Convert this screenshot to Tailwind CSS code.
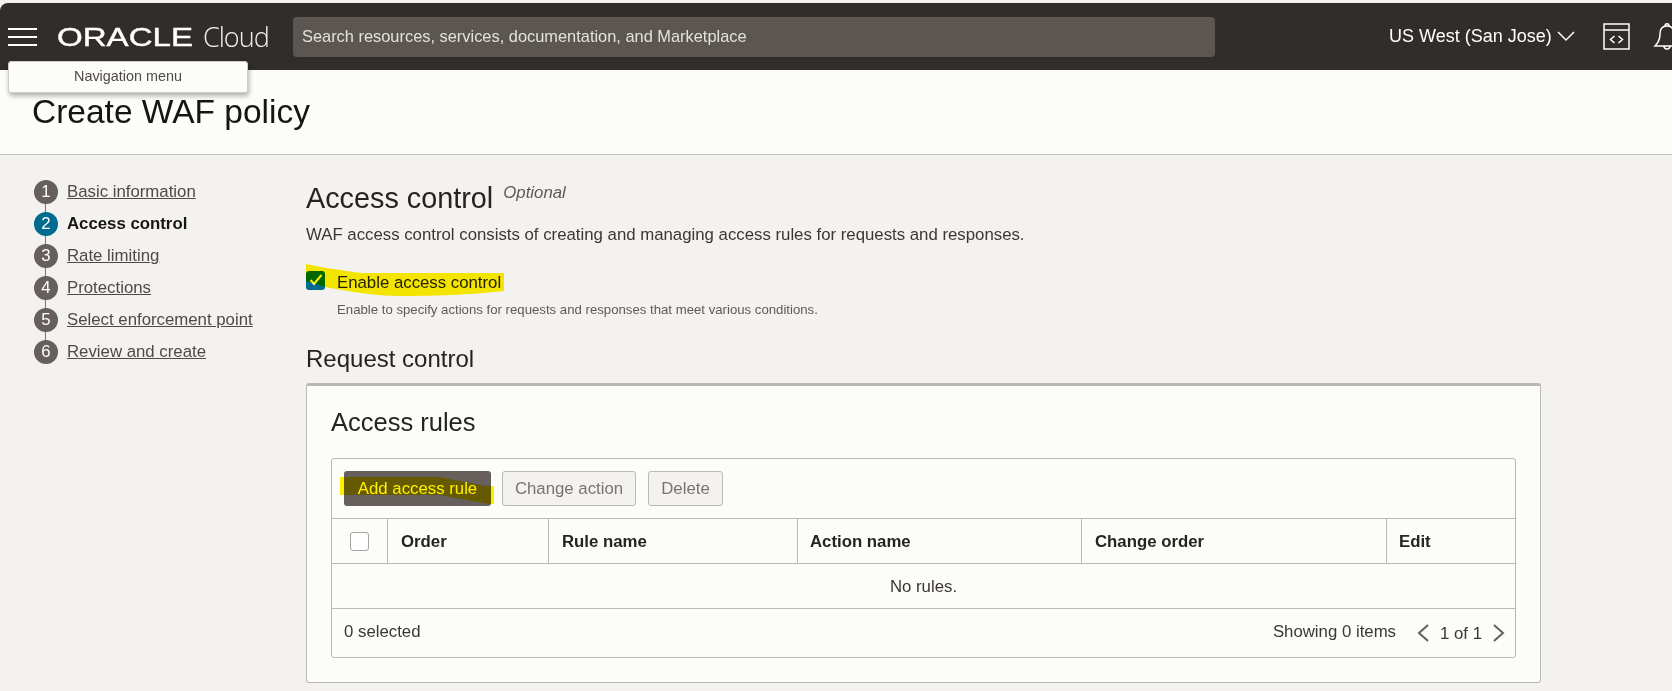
<!DOCTYPE html>
<html lang="en">
<head>
  <meta charset="UTF-8">
  <meta name="viewport" content="width=device-width, initial-scale=1.0">
  <title>Create WAF policy</title>
  <script src="https://cdn.jsdelivr.net/npm/@tailwindcss/browser@4"></script>
</head>
<body class="relative h-[691px] w-[1672px] overflow-hidden bg-[#f3f2f1] pt-[3px] font-['Liberation_Sans',Arial,sans-serif] text-[#312d2a]">
  <!-- top bar -->
  <header class="flex h-[67px] items-center overflow-hidden rounded-tl-lg bg-[#312d2a] text-white">
    <div class="ml-2 flex w-[29px] shrink-0 flex-col gap-[6px]">
      <span class="h-[2px] bg-white"></span>
      <span class="h-[2px] bg-white"></span>
      <span class="h-[2px] bg-white"></span>
    </div>
    <svg class="ml-5 shrink-0" width="137" height="26" viewBox="0 0 137 26">
      <text x="0" y="22" font-family="Liberation Sans" font-size="25" fill="#fff" stroke="#fff" stroke-width="0.4" textLength="136" lengthAdjust="spacingAndGlyphs">ORACLE</text>
    </svg>
    <span class="ml-[9px] w-[90px] shrink-0 font-['Open_Sans',sans-serif] text-[27px] leading-none font-light tracking-[-1px] text-[#f2f0ed]">Cloud</span>
    <div class="flex h-10 w-[922px] shrink-0 items-center rounded bg-[#5b5652] px-[9px] text-[16.4px] text-[#e4e1dd]">Search resources, services, documentation, and Marketplace</div>
    <span class="ml-[174px] w-[163px] shrink-0 text-[18px] whitespace-nowrap">US West (San Jose)</span>
    <svg class="ml-[5px] shrink-0" width="18" height="11" viewBox="0 0 18 11" fill="none" stroke="#fff" stroke-width="1.5"><path d="M1 1l8 8 8-8"/></svg>
    <svg class="ml-[28px] shrink-0" width="27" height="27" viewBox="0 0 27 27" fill="none" stroke="#fff" stroke-width="1.5"><rect x="1" y="1" width="25" height="25"/><path d="M1 7h25M11.5 13l-4 3.5 4 3.5M15.5 13l4 3.5-4 3.5"/></svg>
    <svg class="ml-[23px] shrink-0" width="28" height="30" viewBox="0 0 28 30" fill="none" stroke="#fff" stroke-width="1.5"><path d="M14 4c-5 0-7 3-7 8 0 6-2 9-5 12h24c-3-3-5-6-5-12 0-5-2-8-7-8zM12 4c0-3 4-3 4 0M11 24c0 4 6 4 6 0"/></svg>
  </header>

  <!-- page title -->
  <div class="h-[85px] border-b border-[#c4c0bb] bg-[#fcfcfb] pt-[22px] pl-8">
    <h1 class="text-[33.5px] leading-10 text-[#161513]">Create WAF policy</h1>
  </div>

  <div class="flex">
    <!-- train stops -->
    <ol class="relative ml-[34px] mt-[21px] w-[272px] text-[16.8px]">
      <span class="absolute top-3 left-[11px] h-40 w-px bg-[#7a736e]"></span>
      <li class="relative flex h-8 items-center gap-[9px]"><span class="flex size-6 items-center justify-center rounded-full bg-[#665f5b] text-white">1</span><a class="text-[#4f4a46] underline">Basic information</a></li>
      <li class="relative flex h-8 items-center gap-[9px]"><span class="flex size-6 items-center justify-center rounded-full bg-[#006b8f] text-white">2</span><span class="font-bold text-[#161513]">Access control</span></li>
      <li class="relative flex h-8 items-center gap-[9px]"><span class="flex size-6 items-center justify-center rounded-full bg-[#665f5b] text-white">3</span><a class="text-[#4f4a46] underline">Rate limiting</a></li>
      <li class="relative flex h-8 items-center gap-[9px]"><span class="flex size-6 items-center justify-center rounded-full bg-[#665f5b] text-white">4</span><a class="text-[#4f4a46] underline">Protections</a></li>
      <li class="relative flex h-8 items-center gap-[9px]"><span class="flex size-6 items-center justify-center rounded-full bg-[#665f5b] text-white">5</span><a class="text-[#4f4a46] underline">Select enforcement point</a></li>
      <li class="relative flex h-8 items-center gap-[9px]"><span class="flex size-6 items-center justify-center rounded-full bg-[#665f5b] text-white">6</span><a class="text-[#4f4a46] underline">Review and create</a></li>
    </ol>

    <!-- main column -->
    <main class="w-[1235px] pt-[25px]">
      <div class="flex items-start">
        <h2 class="text-[28.8px] leading-9 text-[#262421]">Access control</h2>
        <span class="ml-[10px] text-[16.8px] italic text-[#5f5a55]">Optional</span>
      </div>
      <p class="mt-[7px] text-[16.8px] leading-6 text-[#3b3734]">WAF access control consists of creating and managing access rules for requests and responses.</p>
      <div class="mt-[23px] flex items-center gap-[12px]">
        <span class="-mt-[5px] flex size-[19px] items-center justify-center rounded-[3px] bg-[#006b8f]">
          <svg width="14" height="12" viewBox="0 0 14 12" fill="none" stroke="#fff" stroke-width="2"><path d="M1.5 6l3.5 4 7.5-9"/></svg>
        </span>
        <label class="text-[16.8px] text-[#262421]">Enable access control</label>
      </div>
      <p class="mt-[7px] ml-[31px] text-[13.2px] leading-4 text-[#5f5a55]">Enable to specify actions for requests and responses that meet various conditions.</p>

      <h3 class="mt-[25px] text-2xl leading-8 text-[#262421]">Request control</h3>

      <!-- access rules card -->
      <section class="mt-[8px] h-[300px] rounded-[3px] border border-t-[3px] border-[#bcb8b2] bg-[#fcfcfb] px-6 pt-[20px]">
        <h4 class="text-[25.5px] leading-8 text-[#262421]">Access rules</h4>
        <div class="mt-[20px] h-[200px] rounded-[3px] border border-[#bcb8b2] text-[16.8px]">
          <div class="flex h-[60px] gap-[11px] border-b border-[#bcb8b2] pt-3 pl-3">
            <button class="h-[35px] w-[147px] rounded-[3px] bg-[#665f5b] text-white">Add access rule</button>
            <button class="h-[35px] w-[134px] rounded-[3px] border border-[#bcb8b2] bg-[#f3f2f1] text-[#7a736e]">Change action</button>
            <button class="ml-px h-[35px] w-[75px] rounded-[3px] border border-[#bcb8b2] bg-[#f3f2f1] text-[#7a736e]">Delete</button>
          </div>
          <div class="grid h-[45px] grid-cols-[56px_161px_249px_284px_305px_1fr] border-b border-[#bcb8b2] font-bold text-[#262421]">
            <div class="flex items-center justify-center border-r border-[#bcb8b2] pr-px"><span class="size-[19px] rounded-[3px] border border-[#a8a39d] bg-white"></span></div>
            <div class="flex items-center border-r border-[#bcb8b2] pl-[13px]">Order</div>
            <div class="flex items-center border-r border-[#bcb8b2] pl-[13px]">Rule name</div>
            <div class="flex items-center border-r border-[#bcb8b2] pl-[12px]">Action name</div>
            <div class="flex items-center border-r border-[#bcb8b2] pl-[13px]">Change order</div>
            <div class="flex items-center pl-[12px]">Edit</div>
          </div>
          <div class="flex h-[45px] items-center justify-center border-b border-[#bcb8b2] text-[#3b3734]">No rules.</div>
          <div class="flex h-[48px] items-center pl-3 pb-1 text-[#3b3734]">
            <span>0 selected</span>
            <span class="ml-auto">Showing 0 items</span>
            <svg class="ml-[20px] mt-1" width="14" height="20" viewBox="0 0 14 20" fill="none" stroke="#665f5b" stroke-width="2"><path d="M12 2l-9 8 9 8"/></svg>
            <span class="ml-[10px] mt-1">1 of 1</span>
            <svg class="ml-[10px] mr-[9px] mt-1" width="14" height="20" viewBox="0 0 14 20" fill="none" stroke="#665f5b" stroke-width="2"><path d="M2 2l9 8-9 8"/></svg>
          </div>
        </div>
      </section>
    </main>
  </div>

  <!-- tooltip over the header -->
  <div class="absolute top-[61px] left-2 flex h-8 w-[240px] items-center justify-center rounded-[3px] border border-[#d0cdc8] bg-[#fcfcfb] text-[14.4px] text-[#4f4a46] shadow-[1px_3px_5px_rgba(0,0,0,0.3)]">Navigation menu</div>

  <!-- marker highlights painted on the screenshot -->
  <svg class="pointer-events-none absolute top-0 left-0 mix-blend-multiply" width="1672" height="691" viewBox="0 0 1672 691" fill="#fff200">
    <path d="M306 264L326 268L361 273H504V291C480 294 440 296 400 296C375 296 345 291 325 287L306 281Z"/>
    <path d="M340 477H439L486 486H494V504H489L439 495H340Z"/>
  </svg>
</body>
</html>
